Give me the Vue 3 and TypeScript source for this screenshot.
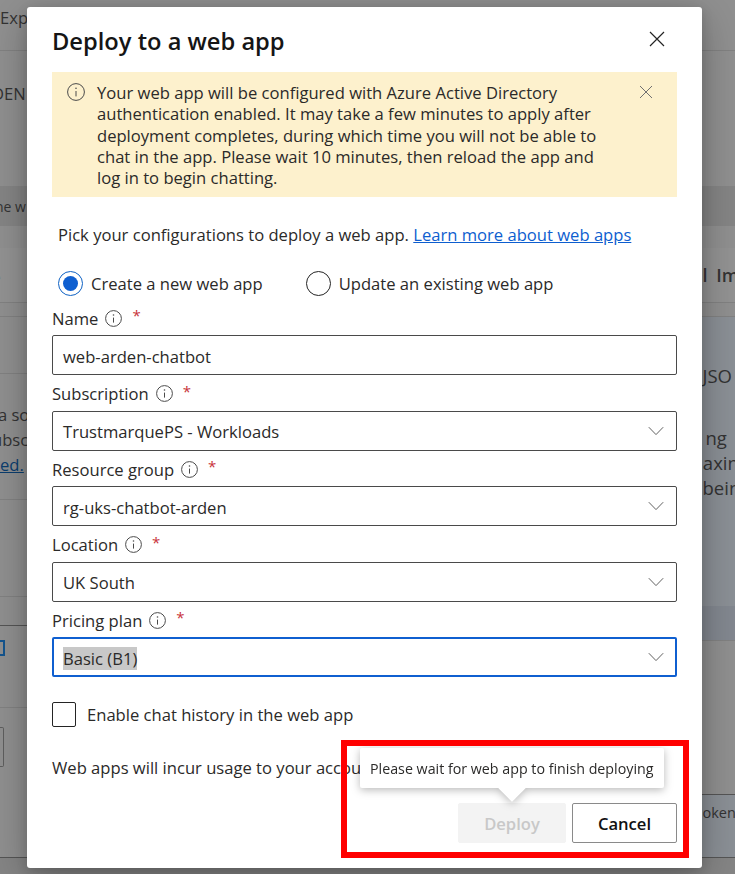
<template>
  <div class="page">
    <!-- dimmed app behind the dialog, one column of strips per side -->
    <div class="backdrop">
      <div v-for="(col, i) in columns" :key="i" class="bg-col" :class="i ? 'bg-right' : 'bg-left'">
        <div
          v-for="(row, j) in col"
          :key="j"
          class="bg-row"
          :class="row.cls"
          :style="{ height: row.h + 'px' }"
        >
          <span v-for="t in row.lines ?? []" :key="t">{{ t }}</span>
        </div>
      </div>
    </div>

    <div class="dialog" role="dialog">
      <header class="head">
        <h1>Deploy to a web app</h1>
        <button class="close" aria-label="Close">
          <svg viewBox="0 0 16 16" width="16" height="16"><path d="M1 1l14 14M15 1L1 15" /></svg>
        </button>
      </header>

      <div class="notice">
        <svg class="notice-icon" viewBox="0 0 18 18" width="18" height="18">
          <circle cx="9" cy="9" r="8.4" />
          <path d="M9 8v5.4" />
          <circle class="dot" cx="9" cy="5.2" r=".8" />
        </svg>
        <p>
          Your web app will be configured with Azure Active Directory authentication enabled. It may take a few
          minutes to apply after deployment completes, during which time you will not be able to chat in the app.
          Please wait 10 minutes, then reload the app and log in to begin chatting.
        </p>
        <svg class="notice-close" viewBox="0 0 14 14" width="14" height="14"><path d="M1 1l12 12M13 1L1 13" /></svg>
      </div>

      <p class="intro">
        Pick your configurations to deploy a web app.
        <a class="link">Learn more about web apps</a>
      </p>

      <div class="radios">
        <label class="radio is-on"><span class="circle"></span>Create a new web app</label>
        <label class="radio"><span class="circle"></span>Update an existing web app</label>
      </div>

      <div class="fields">
        <div v-for="f in fields" :key="f.label" class="field">
          <div class="label">
            <span>{{ f.label }}</span>
            <svg class="info" viewBox="0 0 17 17" width="17" height="17">
              <circle cx="8.5" cy="8.5" r="7.9" />
              <path d="M8.5 7.6v5" />
              <circle class="dot" cx="8.5" cy="5" r=".8" />
            </svg>
            <span class="req">*</span>
          </div>
          <div class="control" :class="{ 'is-focus': f.focus }">
            <span class="value" :class="{ 'is-selected': f.focus }">{{ f.value }}</span>
            <svg v-if="f.select" class="chev" viewBox="0 0 16 10" width="16" height="10"><path d="M.8 1.2L8 8.6l7.2-7.4" /></svg>
          </div>
        </div>
      </div>

      <label class="check"><span class="box"></span>Enable chat history in the web app</label>

      <p class="usage">Web apps will incur usage to your account.</p>

      <div class="actions">
        <div class="tooltip">Please wait for web app to finish deploying</div>
        <button class="btn btn-disabled" disabled>Deploy</button>
        <button class="btn">Cancel</button>
      </div>
    </div>

    <div class="callout"></div>
  </div>
</template>

<script setup lang="ts">
interface Field {
  label: string
  value: string
  select?: boolean
  focus?: boolean
}

interface Strip {
  h: number
  cls?: string
  lines?: string[]
}

const fields: Field[] = [
  { label: 'Name', value: 'web-arden-chatbot' },
  { label: 'Subscription', value: 'TrustmarquePS - Workloads', select: true },
  { label: 'Resource group', value: 'rg-uks-chatbot-arden', select: true },
  { label: 'Location', value: 'UK South', select: true },
  { label: 'Pricing plan', value: 'Basic (B1)', select: true, focus: true },
]

const columns: Strip[][] = [
  [
    { h: 51, cls: 'line s-exp', lines: ['Exp'] },
    { h: 135, cls: 's-den', lines: ['DEN'] },
    { h: 40, cls: 'dark s-hint', lines: ['ne w'] },
    { h: 22 },
    { h: 55, cls: 'light line s-tab', lines: ['e'] },
    { h: 14, cls: 'line' },
    { h: 57, cls: 'line' },
    { h: 126, cls: 'line s-para', lines: ['ta so', 'ubsc', 'ed.'] },
    { h: 97, cls: 'line' },
    { h: 29, cls: 'line-dark' },
    { h: 82, cls: 'line s-icon' },
    { h: 150, cls: 's-box line-dark' },
    { h: 16, cls: 'dark' },
  ],
  [
    { h: 51, cls: 'line' },
    { h: 135 },
    { h: 40, cls: 'dark' },
    { h: 22 },
    { h: 55, cls: 'light line s-tab-r', lines: ['l Im'] },
    { h: 14, cls: 'line' },
    { h: 289, cls: 'blue s-card', lines: ['JSO', 'ng', 'naxin', 'bein'] },
    { h: 35, cls: 'blue-dark line' },
    { h: 154, cls: 'line-dark' },
    { h: 63, cls: 'blue line-dark s-tokens', lines: ['okens'] },
    { h: 16, cls: 'dark' },
  ],
]
</script>

<style>
html,
body {
  margin: 0;
  overflow: hidden;
}
</style>

<style scoped>
.page {
  position: relative;
  width: 735px;
  height: 874px;
  overflow: hidden;
  font-family: "Open Sans", "Noto Sans", sans-serif;
  font-size: 16.6px;
  color: #2b2a29;
}

/* backdrop */
.backdrop {
  display: grid;
  grid-template-columns: minmax(0, 1fr) minmax(0, 1fr);
  height: 100%;
  background: #909090;
  color: #333;
}
.bg-row {
  box-sizing: border-box;
  display: flex;
  flex-direction: column;
  white-space: nowrap;
}
.bg-right .bg-row {
  padding-left: 335px;
}
.line {
  border-bottom: 1px solid #828282;
}
.line-dark {
  border-bottom: 1px solid #555;
}
.dark {
  background: #858585;
}
.light {
  background: #939393;
}
.blue {
  background: #8b9096;
}
.blue-dark {
  background: #838890;
}
.s-exp {
  padding-top: 6px;
}
.s-den {
  padding-top: 31px;
  margin-left: -8px;
}
.s-hint {
  justify-content: center;
  margin-left: -5px;
  font-size: 14px;
}
.s-tab {
  padding-top: 17px;
  margin-left: -9px;
  font-weight: 600;
}
.s-para {
  padding-top: 28px;
  margin-left: -8px;
  line-height: 25px;
}
.s-para span:last-child {
  color: #0b3e6f;
  text-decoration: underline;
  margin-left: 8px;
  width: 20px;
}
.bg-right .s-tab-r {
  padding: 15px 0 0 335px;
  font-size: 18px;
  font-weight: 600;
  word-spacing: 4px;
}
.bg-right .s-card {
  padding: 46px 0 0 335px;
  font-size: 18.5px;
  line-height: 25.5px;
}
.s-card span:nth-child(2) {
  margin-top: 36px;
  padding-left: 3px;
  line-height: 25px;
}
.s-card span:nth-child(3) {
  margin-left: -11px;
}
.bg-right .s-tokens {
  padding-top: 8px;
  font-size: 14.5px;
}
.s-icon::before {
  content: "";
  width: 3px;
  height: 12px;
  margin-top: 14px;
  border: 2px solid #14558f;
  border-left: 0;
}
.s-box::before {
  content: "";
  width: 3px;
  height: 38px;
  margin-top: 19px;
  border: 1px solid #5e5e5e;
  border-left: 0;
  border-radius: 0 2px 2px 0;
}

/* dialog */
.dialog {
  position: absolute;
  left: 27px;
  top: 7px;
  width: 675px;
  height: 861px;
  box-sizing: border-box;
  padding: 0 25px;
  background: #fff;
  border-radius: 3px;
  box-shadow: 0 10px 40px rgba(0, 0, 0, 0.28), 0 3px 12px rgba(0, 0, 0, 0.14);
}
.head {
  display: flex;
  justify-content: space-between;
  align-items: center;
  height: 65px;
}
h1 {
  margin: 2px 0 0;
  font-size: 23.7px;
  font-weight: 600;
  color: #151515;
}
.close {
  display: flex;
  padding: 0;
  margin: -2px 12px 0 0;
  border: 0;
  background: none;
}
.close path {
  fill: none;
  stroke: #242424;
  stroke-width: 1.2;
}

.notice {
  display: flex;
  height: 125px;
  box-sizing: border-box;
  padding: 10px 24px 0 15px;
  background: #fdf1cd;
  line-height: 21.3px;
}
.notice p {
  width: 510px;
  margin: 0 0 0 12px;
}
.notice-icon {
  flex: none;
  margin-top: 1px;
}
.notice-icon circle,
.notice-icon path,
.info circle,
.info path {
  fill: none;
  stroke: #4a4a4a;
  stroke-width: 1;
}
.notice-icon .dot,
.info .dot {
  fill: #4a4a4a;
  stroke: none;
}
.notice-close {
  flex: none;
  margin: 3px 0 0 auto;
}
.notice-close path {
  fill: none;
  stroke: #707070;
  stroke-width: 1;
}

.intro {
  margin: 26px 0 0 6px;
  line-height: 24px;
}
.link {
  color: #0d5ecf;
  text-decoration: underline;
}

.radios {
  display: flex;
  gap: 43px;
  margin: 24px 0 0 6px;
  height: 25px;
}
.radio {
  display: flex;
  align-items: center;
  gap: 8px;
}
.circle {
  position: relative;
  width: 25px;
  height: 25px;
  box-sizing: border-box;
  border: 1.5px solid #242424;
  border-radius: 50%;
}
.is-on .circle {
  border-color: #0f62c4;
}
.is-on .circle::after {
  content: "";
  position: absolute;
  inset: 4px;
  border-radius: 50%;
  background: #0f5fd0;
}

.fields {
  padding-top: 3.5px;
}
.label {
  display: flex;
  align-items: center;
  height: 35.5px;
  box-sizing: border-box;
  padding-top: 2px;
  gap: 7px;
}
.req {
  margin-left: 3px;
  font-size: 15px;
  color: #c8323a;
  transform: translateY(-3px);
}
.info {
  flex: none;
}
.control {
  display: flex;
  align-items: center;
  justify-content: space-between;
  height: 40px;
  box-sizing: border-box;
  padding: 0 12px 0 10px;
  border: 1px solid #4a4a4a;
  border-radius: 2px;
}
.control.is-focus {
  border: 2px solid #0f5fd0;
  padding-left: 9px;
  padding-right: 11px;
}
.value {
  transform: translateY(1px);
}
.value.is-selected {
  background: #c8c8c8;
  line-height: 23px;
}
.chev path {
  fill: none;
  stroke: #616161;
  stroke-width: 1;
}

.check {
  display: flex;
  align-items: center;
  gap: 11px;
  margin-top: 25px;
  height: 25px;
}
.box {
  width: 24px;
  height: 25px;
  box-sizing: border-box;
  border: 1px solid #242424;
  border-radius: 2px;
}

.usage {
  margin: 29px 0 0;
  line-height: 24px;
  white-space: nowrap;
}

.actions {
  position: relative;
  display: flex;
  justify-content: flex-end;
  gap: 6px;
  margin-top: 23px;
}
.btn {
  width: 105px;
  height: 40px;
  box-sizing: border-box;
  padding: 0;
  border: 1px solid #8a8a8a;
  border-radius: 2px;
  background: #fff;
  font: inherit;
  font-weight: 600;
  color: #111;
}
.btn-disabled {
  width: 108px;
  border-color: #f3f3f3;
  background: #f3f3f3;
  color: #c8c8c8;
}
.tooltip {
  position: absolute;
  left: 308px;
  bottom: 55px;
  width: 304px;
  height: 40px;
  box-sizing: border-box;
  padding: 0 10px;
  display: flex;
  align-items: center;
  background: #fff;
  border-radius: 2px;
  filter: drop-shadow(0 2px 4px rgba(0, 0, 0, 0.28));
  font-size: 14.25px;
  white-space: nowrap;
}
.tooltip::after {
  content: "";
  position: absolute;
  left: 141.5px;
  bottom: -10px;
  width: 20px;
  height: 20px;
  background: #fff;
  transform: rotate(45deg);
  clip-path: polygon(100% 0, 100% 100%, 0 100%);
}

/* red annotation drawn on the screenshot */
.callout {
  position: absolute;
  left: 341px;
  top: 740px;
  width: 348px;
  height: 118px;
  box-sizing: border-box;
  border: 6px solid #ff0000;
  pointer-events: none;
}
</style>
